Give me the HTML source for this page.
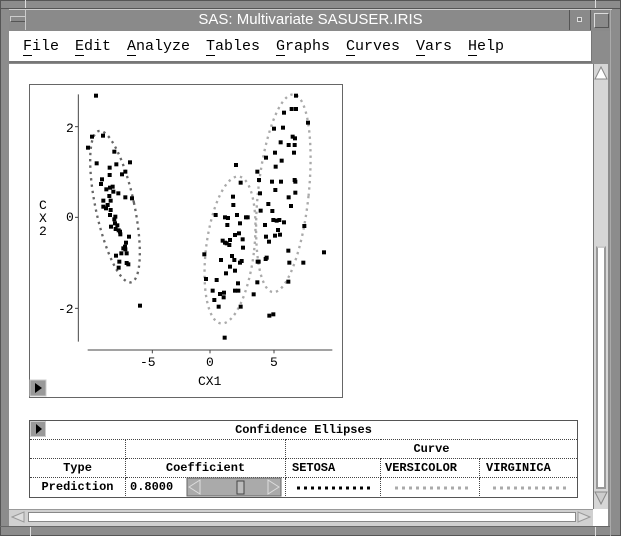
<!DOCTYPE html>
<html><head><style>
body{margin:0;width:621px;height:536px;background:#8c8c8c;position:relative;overflow:hidden;font-family:"Liberation Mono",monospace}
.a{position:absolute}
.m{position:absolute;top:0;line-height:32px;font-size:15px}
.m u{text-decoration:none;border-bottom:1px solid #000}
table{border-collapse:collapse;font:bold 12px "Liberation Mono",monospace}
td{border:1px dotted #444;padding:0;height:18px;text-align:center}
</style></head><body>
<div class="a" style="left:0;top:0;width:621px;height:536px;border:1px solid #555;box-sizing:border-box"></div>
<div class="a" style="left:25px;top:0;width:1px;height:9px;background:#ddd"></div>
<div class="a" style="left:595px;top:0;width:1px;height:9px;background:#ddd"></div>
<div class="a" style="left:0;top:8px;width:621px;height:1px;background:#555"></div>
<div class="a" style="left:9px;top:9px;width:603px;height:21px;background:#8a8a8a;border-top:1px solid #ccc"></div>
<div class="a" style="left:10px;top:16px;width:14px;height:4px;border:1px solid #ccc;border-right-color:#555;border-bottom-color:#555"></div>
<div class="a" style="left:25px;top:10px;width:1px;height:20px;background:#ccc"></div>
<div class="a" style="left:0;top:10px;width:621px;text-align:center;color:#fff;font:15px 'Liberation Sans',sans-serif;line-height:20px">SAS: Multivariate SASUSER.IRIS</div>
<div class="a" style="left:569px;top:10px;width:1px;height:20px;background:#555"></div>
<div class="a" style="left:577px;top:17px;width:3px;height:3px;border:1px solid #ddd;background:#777"></div>
<div class="a" style="left:590px;top:10px;width:1px;height:20px;background:#555"></div>
<div class="a" style="left:594px;top:13px;width:13px;height:13px;border:1px solid #ddd;border-right-color:#555;border-bottom-color:#555"></div>
<div class="a" style="left:610px;top:10px;width:1px;height:526px;background:#aaa"></div>
<div class="a" style="left:9px;top:31px;width:583px;height:32px;background:#fff;border-right:1px solid #777;border-bottom:2px solid #777;box-sizing:border-box;color:#000">
<span class="m" style="left:14px"><u>F</u>ile</span><span class="m" style="left:66px"><u>E</u>dit</span><span class="m" style="left:118px"><u>A</u>nalyze</span><span class="m" style="left:197px"><u>T</u>ables</span><span class="m" style="left:267px"><u>G</u>raphs</span><span class="m" style="left:337px"><u>C</u>urves</span><span class="m" style="left:407px"><u>V</u>ars</span><span class="m" style="left:459px"><u>H</u>elp</span></div>
<div class="a" style="left:9px;top:64px;width:584px;height:445px;background:#fff"></div>
<div class="a" style="left:593px;top:64px;width:15px;height:445px;background:#d6d6d6;border-left:1px solid #777;box-sizing:border-box"></div>
<div class="a" style="left:596px;top:246px;width:10px;height:243px;background:#fff;border:2px solid #999;border-top-color:#ccc;box-sizing:border-box"></div>
<svg class="a" style="left:594px;top:66px" width="14" height="14"><polygon points="7,1 13,13 1,13" fill="#fff" stroke="#888"/></svg>
<svg class="a" style="left:594px;top:491px" width="14" height="14"><polygon points="1,1 13,1 7,13" fill="#ccc" stroke="#888"/></svg>
<div class="a" style="left:9px;top:509px;width:584px;height:17px;background:#d0d0d0;border-top:1px solid #999;box-sizing:border-box"></div>
<div class="a" style="left:28px;top:512px;width:548px;height:10px;background:#fff;border:1px solid #888;box-sizing:border-box"></div>
<svg class="a" style="left:11px;top:511px" width="14" height="12"><polygon points="1,6 13,1 13,11" fill="#ddd" stroke="#999"/></svg>
<svg class="a" style="left:577px;top:511px" width="14" height="12"><polygon points="13,6 1,1 1,11" fill="#ddd" stroke="#999"/></svg>
<div class="a" style="left:593px;top:509px;width:15px;height:17px;background:#fff"></div>
<div class="a" style="left:0;top:526px;width:610px;height:1px;background:#666"></div>
<div class="a" style="left:30px;top:527px;width:1px;height:9px;background:#ddd"></div>
<div class="a" style="left:595px;top:527px;width:1px;height:9px;background:#ddd"></div>
<svg class="a" style="left:0;top:0" width="621" height="536">
<rect x="29.5" y="84.5" width="313" height="313" fill="#fff" stroke="#666"/>
<g transform="translate(20,80) scale(0.33333)">
<line x1="175" y1="43" x2="175" y2="785" stroke="#444" stroke-width="3"/>
<line x1="203" y1="810" x2="937" y2="810" stroke="#444" stroke-width="3"/>
<g stroke="#444" stroke-width="3"><line x1="165" y1="140" x2="175" y2="140"/><line x1="165" y1="412" x2="175" y2="412"/><line x1="165" y1="685" x2="175" y2="685"/><line x1="397" y1="810" x2="397" y2="820"/><line x1="570" y1="810" x2="570" y2="820"/><line x1="762" y1="810" x2="762" y2="820"/></g>
<g fill="none" stroke-width="7" stroke-dasharray="7 12">
<ellipse cx="285" cy="380" rx="58" ry="232" transform="rotate(-12 285 380)" stroke="#666"/>
<ellipse cx="630" cy="510" rx="72" ry="222" transform="rotate(7 630 510)" stroke="#aaa"/>
<ellipse cx="790" cy="340" rx="76" ry="298" transform="rotate(6 790 340)" stroke="#aaa"/>
</g>
<g fill="#000" id="pts"></g>
</g>
<g font-family="Liberation Mono,monospace" font-size="13" fill="#000">
<text x="66" y="132">2</text><text x="66" y="221">0</text><text x="58" y="313">-2</text>
<text x="140" y="366">-5</text><text x="206" y="366">0</text><text x="270" y="366">5</text>
<text x="198" y="385">CX1</text>
<text x="39" y="209">C</text><text x="39" y="222">X</text><text x="39" y="235">2</text>
</g>
<rect x="30" y="380" width="16" height="16" fill="#999" stroke="#ccc"/>
<polygon points="35,383 42,388 35,393" fill="#000"/>
</svg>
<div class="a" style="left:29px;top:420px;width:549px;height:78px;border:1px solid #555;box-sizing:border-box;background:#fff">
<table style="width:547px">
<tr><td colspan="5" style="height:18px;border-top:none;border-left:none;border-right:none">Confidence Ellipses</td></tr>
<tr><td style="width:95px;border-left:none"></td><td style="width:159px"></td><td colspan="3" style="border-right:none">Curve</td></tr>
<tr><td style="border-left:none">Type</td><td>Coefficient</td><td style="text-align:left;padding-left:6px;width:88px">SETOSA</td><td style="text-align:left;padding-left:4px;width:94px">VERSICOLOR</td><td style="text-align:left;padding-left:6px;border-right:none">VIRGINICA</td></tr>
<tr><td style="border-left:none;border-bottom:none">Prediction</td><td style="text-align:left;padding-left:4px;border-bottom:none">0.8000</td><td style="border-bottom:none"></td><td style="border-bottom:none"></td><td style="border-bottom:none;border-right:none"></td></tr>
</table>
</div>
<svg class="a" style="left:29px;top:420px" width="549" height="78">
<rect x="1.5" y="1.5" width="15" height="15" fill="#999" stroke="#ccc"/>
<polygon points="7,4 13,9 7,14" fill="#000"/>
<rect x="158" y="58" width="94" height="18" fill="#aaa" stroke="#666"/>
<polygon points="160,67 171,60 171,74" fill="#aaa" stroke="#ddd"/>
<polygon points="250,67 239,60 239,74" fill="#aaa" stroke="#ddd"/>
<rect x="208" y="61" width="7" height="13" fill="#bbb" stroke="#444"/>
<line x1="268" y1="68" x2="341" y2="68" stroke="#000" stroke-width="3" stroke-dasharray="3 4"/>
<line x1="366" y1="68" x2="440" y2="68" stroke="#aaa" stroke-width="3" stroke-dasharray="3 4"/>
<line x1="464" y1="68" x2="537" y2="68" stroke="#aaa" stroke-width="3" stroke-dasharray="3 4"/>
</svg>
<script>
var p=[[228,47],[216,170],[204,203],[249,167],[230,250],[283,215],[269,263],[289,253],[330,247],[269,285],[246,298],[259,328],[270,323],[280,335],[295,340],[316,275],[316,352],[336,355],[250,362],[272,362],[258,385],[272,390],[270,405],[283,418],[292,436],[273,440],[287,447],[296,451],[301,463],[327,470],[318,488],[310,505],[320,520],[316,508],[288,527],[304,520],[298,545],[320,549],[325,553],[296,563],[243,312],[263,375],[268,348],[306,283],[360,677],[286,410],[300,455],[278,320],[285,430],[315,500],[250,380],
[648,255],[662,308],[639,350],[640,375],[587,405],[615,412],[624,414],[651,405],[622,435],[660,430],[678,412],[683,412],[645,465],[657,460],[608,482],[615,488],[630,480],[620,490],[628,495],[668,478],[636,528],[643,540],[660,548],[665,543],[603,540],[553,523],[558,597],[618,580],[645,572],[654,610],[655,632],[612,638],[600,642],[578,632],[583,660],[596,680],[611,652],[662,680],[614,773],[701,643],[669,503],[713,545],[645,632],[630,560],[590,600],
[828,47],[792,98],[815,87],[828,87],[864,128],[762,146],[789,143],[818,170],[782,187],[806,195],[825,175],[824,195],[822,218],[738,233],[765,218],[785,242],[712,275],[717,300],[756,305],[783,305],[767,260],[766,330],[824,300],[826,305],[826,338],[806,352],[813,378],[745,372],[757,393],[722,392],[735,435],[760,420],[770,422],[778,420],[792,427],[774,450],[780,464],[765,467],[747,485],[740,533],[737,537],[716,545],[805,512],[808,548],[850,548],[853,438],[712,607],[805,605],[748,707],[760,703],[912,517],[720,340],[738,470]];
var g=document.getElementById('pts'),s='';
p.forEach(function(q){s+='<rect x="'+(q[0]-6)+'" y="'+(q[1]-6)+'" width="12" height="12"/>';});
g.innerHTML=s;
</script>
</body></html>
